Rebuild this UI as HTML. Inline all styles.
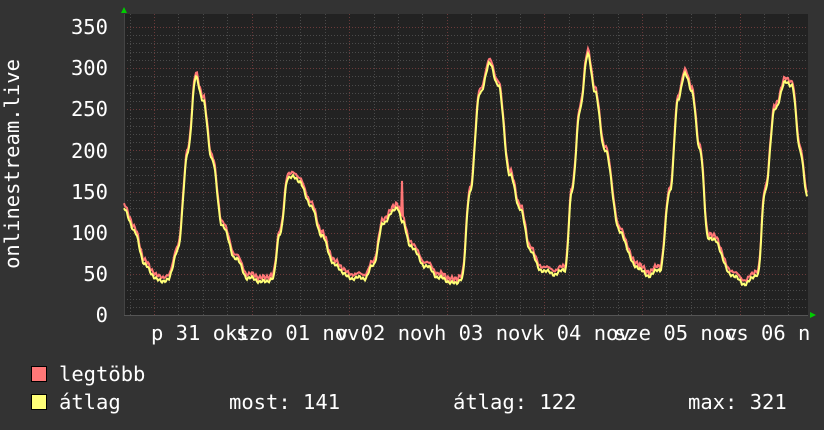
<!DOCTYPE html>
<html><head><meta charset="utf-8"><style>
html,body{margin:0;padding:0;background:#333;}
body{width:824px;height:430px;overflow:hidden;position:relative;font-family:"DejaVu Sans Mono","Liberation Mono",monospace;color:#fff;}
svg{position:absolute;left:0;top:0}
</style></head><body>
<svg id="g" width="824" height="430" xmlns="http://www.w3.org/2000/svg" font-family="DejaVu Sans Mono, Liberation Mono, monospace" font-size="20.5" fill="#fff">
<rect x="0" y="0" width="824" height="430" fill="#333"/>
<rect x="124" y="14" width="684" height="301" fill="#222"/>
<g id="grid"></g>
<g id="data"></g>
<polygon points="121,13 124,7 127,13" fill="#0c0"/>
<polygon points="810,312 816,315 810,318" fill="#0c0"/>
<g text-anchor="end">
<text x="108" y="34">350</text><text x="108" y="75">300</text><text x="108" y="116">250</text><text x="108" y="158">200</text><text x="108" y="199">150</text><text x="108" y="240">100</text><text x="108" y="281">50</text><text x="108" y="322">0</text>
</g>
<text transform="translate(19,164) rotate(-90)" text-anchor="middle">onlinestream.live</text>
<g font-size="20.5">
<text x="151" y="340">p 31 okt</text>
<text x="236" y="340">szo 01 nov</text>
<text x="336" y="340">v 02 nov</text>
<text x="434" y="340">h 03 nov</text>
<text x="532" y="340">k 04 nov</text>
<text x="614" y="340">sze 05 nov</text>
<text x="724" y="340">cs 06 n</text>
</g>
<rect x="31.5" y="366.5" width="15" height="15" fill="#f77" stroke="#000"/>
<rect x="31.5" y="394.5" width="15" height="15" fill="#ff7" stroke="#000"/>
<text x="59" y="381">legtöbb</text>
<text x="59" y="409">átlag</text>
<text x="229" y="409">most: 141</text>
<text x="453" y="409">átlag: 122</text>
<text x="688" y="409">max: 321</text>
</svg>
<script>
var ns="http://www.w3.org/2000/svg";
var grid=document.getElementById('grid'),data=document.getElementById('data');
function ln(x1,y1,x2,y2,c,d){var l=document.createElementNS(ns,'line');l.setAttribute('x1',x1);l.setAttribute('y1',y1);l.setAttribute('x2',x2);l.setAttribute('y2',y2);l.setAttribute('stroke',c);l.setAttribute('stroke-width',1);if(d)l.setAttribute('stroke-dasharray',d);grid.appendChild(l);}
for(var v=0;v<=350;v+=10){var y=Math.round(315-v*0.8229)+0.5;ln(124,y,808,y,v%50==0?'#6a3a3a':'#4a4a4a','1,2');}
for(var x=154-24.4*1;x<808;x+=24.4){if(x<124)continue;var xx=Math.round(x)+0.5;var maj=Math.abs(((x-154)/97.7)-Math.round((x-154)/97.7))<0.01;ln(xx,14,xx,315,maj?'#6a3a3a':'#4a4a4a','1,2');}
ln(124.5,14,124.5,315,'#444');ln(124,315.5,808,315.5,'#555');
var k=[[124,130],[135,100],[145,60],[158,42],[168,42],[178,80],[188,200],[196,290],[203,260],[212,190],[222,110],[235,70],[248,45],[265,40],[273,45],[280,100],[288,165],[293,170],[300,160],[312,130],[322,95],[335,60],[350,45],[365,45],[373,60],[383,110],[392,125],[398,130],[402,115],[410,85],[425,60],[440,45],[455,38],[462,45],[470,150],[480,270],[490,305],[498,280],[510,170],[520,130],[530,80],[540,55],[555,50],[565,55],[572,150],[580,250],[588,318],[595,270],[605,200],[620,100],[635,60],[648,48],[660,55],[670,150],[678,260],[685,295],[692,270],[700,200],[708,95],[715,90],[730,50],[745,38],[758,50],[765,150],[775,250],[785,282],[792,280],[800,200],[808,140]];
function val(x){for(var i=0;i<k.length-1;i++){if(x>=k[i][0]&&x<=k[i+1][0]){var t=(x-k[i][0])/(k[i+1][0]-k[i][0]);t=(1-Math.cos(t*Math.PI))/2;return k[i][1]+(k[i+1][1]-k[i][1])*t;}}return 140;}
var pm='',pa='';
for(var x=124;x<=807;x++){var a=val(x);var n=Math.sin(x*1.7)*1.5+Math.sin(x*0.53)*1.5;var av=a+n;var mx=av+3+Math.abs(Math.sin(x*0.9))*3;if(x==402)mx=163;
pm+=(x==124?'M':'L')+x+','+(315-mx*0.8229).toFixed(1);pa+=(x==124?'M':'L')+x+','+(315-av*0.8229).toFixed(1);}
function p(d,c){var e=document.createElementNS(ns,'path');e.setAttribute('d',d);e.setAttribute('fill','none');e.setAttribute('stroke',c);e.setAttribute('stroke-width',2);data.appendChild(e);}
p(pm,'#f77');p(pa,'#ff7');
</script>
</body></html>
